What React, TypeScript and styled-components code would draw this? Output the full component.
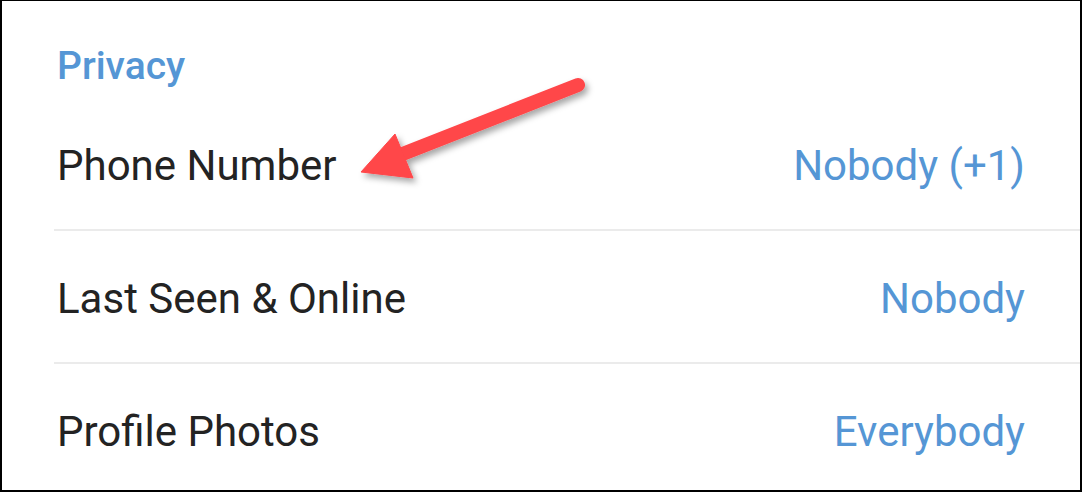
import React from "react";
import styled, { createGlobalStyle } from "styled-components";

const Global = createGlobalStyle`
  html, body { margin: 0; padding: 0; background: #ffffff; }
  body { font-family: Roboto, "Noto Sans", Arial, sans-serif; }
  * { box-sizing: border-box; }
`;

const Frame = styled.div`
  position: relative;
  width: 1082px;
  height: 492px;
  background: #ffffff;
  border-top: 1px solid #000;
  border-left: 2px solid #000;
  border-right: 2px solid #000;
  border-bottom: 2px solid #000;
  overflow: hidden;
`;

const SectionTitle = styled.div`
  height: 97px;
  padding: 46px 0 0 55px;
  font-size: 39px;
  line-height: 39px;
  font-weight: 500;
  color: #5596d5;
`;

const Row = styled.div`
  display: flex;
  justify-content: space-between;
  align-items: flex-start;
  height: 133px;
  margin-left: 52px;
  padding: 47px 55px 0 3px;
  border-bottom: 2px solid #ebebeb;
  &:last-child { border-bottom: none; }
`;

const Label = styled.span`
  font-size: 42px;
  line-height: 42px;
  color: #232323;
`;

const Value = styled.span`
  font-size: 42px;
  line-height: 42px;
  color: #5596d5;
`;

const Arrow = styled.svg`
  position: absolute;
  left: 0;
  top: 0;
  pointer-events: none;
`;

const rows = [
  { label: "Phone Number", value: "Nobody (+1)" },
  { label: "Last Seen & Online", value: "Nobody" },
  { label: "Profile Photos", value: "Everybody" },
];

export default function App() {
  return (
    <>
      <Global />
      <Frame>
        <SectionTitle>Privacy</SectionTitle>
        {rows.map((r) => (
          <Row key={r.label}>
            <Label>{r.label}</Label>
            <Value>{r.value}</Value>
          </Row>
        ))}
        <Arrow width="1082" height="492" viewBox="-2 -1 1082 492">
          <defs>
            <filter id="sh" x="-20%" y="-20%" width="140%" height="140%">
              <feDropShadow dx="3" dy="4" stdDeviation="3" floodColor="#000" floodOpacity="0.35" />
            </filter>
          </defs>
          <g filter="url(#sh)" fill="#ff4649" stroke="#ff4649">
            <line x1="574" y1="83" x2="396" y2="153" strokeWidth="14" strokeLinecap="round" />
            <polygon points="357,170 391,132 409,176" strokeWidth="1" strokeLinejoin="round" />
          </g>
        </Arrow>
      </Frame>
    </>
  );
}
